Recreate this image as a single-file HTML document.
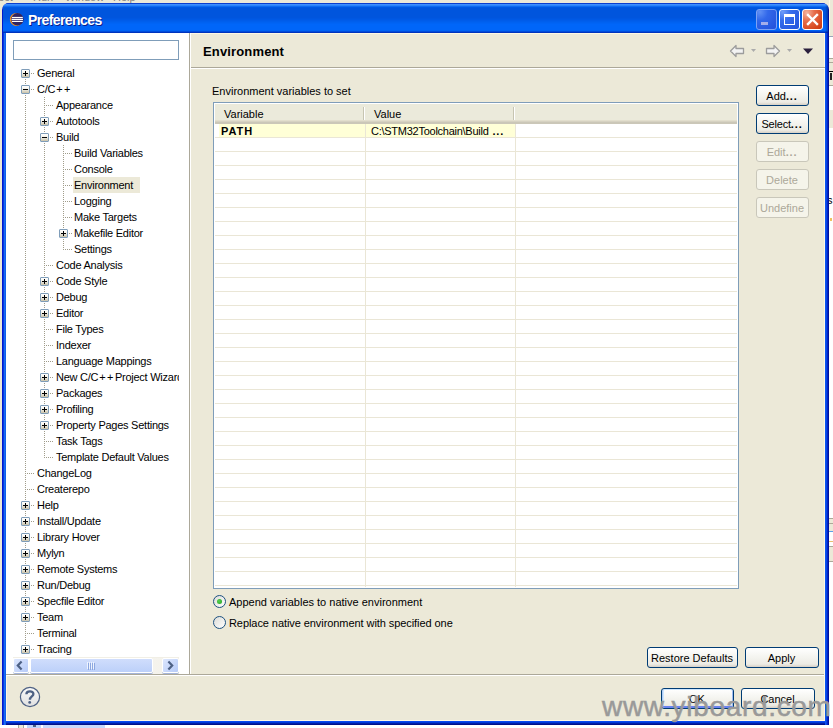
<!DOCTYPE html><html><head><meta charset="utf-8"><style>
*{margin:0;padding:0;box-sizing:border-box}
html,body{width:833px;height:728px;overflow:hidden;background:#ECE9D8}
body{position:relative;font-family:"Liberation Sans",sans-serif;font-size:11px;color:#000}
.a{position:absolute}
.t{position:absolute;white-space:nowrap;line-height:16px;height:16px}
.tr{letter-spacing:-0.25px}
.dots{font-weight:bold;letter-spacing:0.85px}
.vd{position:absolute;width:1px;background:repeating-linear-gradient(to bottom,#A09C8A 0 1px,transparent 1px 2px)}
.hd{position:absolute;height:1px;background:repeating-linear-gradient(to right,#A09C8A 0 1px,transparent 1px 2px)}
.bx{position:absolute;width:9px;height:9px;border:1px solid #7F9DB9;border-radius:1px;background:linear-gradient(#FFFFFF,#F6F4EC 40%,#C9C2AA)}
.bx:before{content:"";position:absolute;left:1px;top:3px;width:5px;height:1px;background:#000}
.bx.p:after{content:"";position:absolute;left:3px;top:1px;width:1px;height:5px;background:#000}
.btn{position:absolute;height:21px;border:1px solid #003C74;border-radius:3px;background:linear-gradient(#FFFFFF 0%,#F6F6F2 40%,#ECEBE4 85%,#D6D0C5 100%);text-align:center;line-height:20px;white-space:nowrap;text-indent:-1px}
.btn.dis{border-color:#C9C7BA;background:#F5F4EA;color:#ACA899}
.hdr{position:absolute;top:104px;height:20px;background:linear-gradient(#EBEADB 0,#EBEADB 16px,#E2DECD 16px,#E2DECD 17px,#D6D2C2 17px,#D6D2C2 18px,#CBC7B8 18px)}
</style></head><body>
<div class="a" style="left:0;top:-9px;white-space:nowrap;color:#808080;font-size:11px;line-height:12px">
<span class="a" style="left:-14px">roject</span><span class="a" style="left:33px">Run</span><span class="a" style="left:65px">Window</span><span class="a" style="left:113px">Help</span></div>
<div class="a" style="left:829px;top:36px;width:4px;height:692px;background:#fff"></div>
<div class="a" style="left:829px;top:36px;width:4px;height:1px;background:#9AA6BA"></div>
<div class="a" style="left:829px;top:58px;width:4px;height:1px;background:#ACA899"></div>
<div class="a" style="left:829px;top:59px;width:4px;height:3px;background:#ECE9D8"></div>
<div class="a" style="left:829px;top:62px;width:4px;height:1px;background:#ACA899"></div>
<div class="a" style="left:829px;top:63px;width:4px;height:8px;background:#ECE9D8"></div>
<div class="a" style="left:829px;top:71px;width:4px;height:1px;background:#000"></div>
<div class="a" style="left:829px;top:72px;width:4px;height:13px;background:#ECE9D8"></div>
<div class="a" style="left:829px;top:85px;width:4px;height:1px;background:#ACA899"></div>
<div class="a" style="left:829px;top:110px;width:4px;height:18px;background:#ECE9D8"></div>
<div class="a" style="left:829px;top:518px;width:4px;height:1px;background:#ACA899"></div>
<div class="a" style="left:829px;top:519px;width:4px;height:4px;background:#ECE9D8"></div>
<div class="a" style="left:829px;top:523px;width:4px;height:1px;background:#ACA899"></div>
<div class="a" style="left:829px;top:524px;width:4px;height:7px;background:#ECE9D8"></div>
<div class="a" style="left:829px;top:531px;width:4px;height:1px;background:#5AA0E8"></div>
<div class="a" style="left:829px;top:541px;width:4px;height:1px;background:#E8C070"></div>
<div class="a" style="left:829px;top:546px;width:4px;height:1px;background:#ACA899"></div>
<div class="a" style="left:829px;top:547px;width:4px;height:14px;background:#ECE9D8"></div>
<div class="a" style="left:829px;top:561px;width:4px;height:1px;background:#ACA899"></div>
<div class="a" style="left:830px;top:73px;width:2px;height:7px;background:#222"></div>
<div class="a" style="left:829px;top:0;width:1px;height:36px;background:#FFF8E4"></div>
<div class="a" style="left:829px;top:190px;width:4px;height:20px;overflow:hidden"><div class="t" style="left:-2px;top:2px;font-size:11px">s</div></div>
<div class="a" style="left:830px;top:218px;width:2px;height:3px;background:#F0C060"></div>
<div class="a" style="left:0;top:725px;width:833px;height:3px;background:#fff"></div>
<div class="a" style="left:18px;top:725px;width:6px;height:3px;background:#ECE9D8;border-left:1px solid #ACA899;border-right:1px solid #ACA899"></div>
<div class="a" style="left:27px;top:725px;width:14px;height:3px;background:#C4D4FA"></div>
<div class="a" style="left:33px;top:725px;width:3px;height:2px;background:#4D6185"></div>
<div class="a" style="left:43px;top:725px;width:62px;height:3px;background:#C8D8FB"></div>
<div class="a" style="left:2px;top:3px;width:827px;height:722px;border-radius:7px 7px 0 0;background:#0019CF;overflow:hidden">
<div class="a" style="left:1px;top:0;width:825px;height:30px;background:linear-gradient(to bottom,#0A3FCF 0px,#0A3FCF 1px,#3D8FFF 1px,#3D8FFF 2px,#2B82F9 2px,#2B82F9 3px,#0D6BF1 3px,#0D6BF1 4px,#0059E3 4px,#0059E3 5px,#0055DD 5px,#0055DD 14px,#0055DE 14px,#0055DE 15px,#0057E1 15px,#0057E1 16px,#0059E5 16px,#0059E5 17px,#005CE9 17px,#005CE9 18px,#005FED 18px,#005FED 19px,#0062F1 19px,#0062F1 20px,#0064F5 20px,#0064F5 21px,#0066F9 21px,#0066F9 27px,#0062F4 27px,#0062F4 28px,#004CDB 28px,#004CDB 29px,#0033BE 29px,#0033BE 30px)"></div>
<div class="a" style="left:823px;top:0;width:4px;height:30px;background:linear-gradient(to right,transparent,rgba(0,0,80,0.45))"></div>
<div class="a" style="left:0;top:30px;width:4px;height:692px;background:linear-gradient(to right,#0019CF 0,#0019CF 1px,#0836E2 1px,#0836E2 2px,#1A6CF0 2px,#1A6CF0 3px,#0F60EC 3px)"></div>
<div class="a" style="left:823px;top:30px;width:4px;height:692px;background:linear-gradient(to left,#00109A 0,#00109A 1px,#0026C8 1px,#0026C8 2px,#0A44E4 2px,#0A44E4 3px,#0A55F0 3px)"></div>
<div class="a" style="left:4px;top:718px;width:819px;height:4px;background:linear-gradient(to bottom,#0A4AF0 0,#0A4AF0 1px,#0038D8 1px,#0038D8 2px,#0020A8 2px,#0020A8 3px,#00108A 3px)"></div>
</div>
<svg class="a" style="left:7px;top:9px" width="20" height="20" viewBox="0 0 20 20"><circle cx="9.4" cy="10.4" r="6.5" fill="#F7941E"/><circle cx="10.4" cy="10.3" r="6.2" fill="#2F2461"/><rect x="5" y="7.9" width="10.8" height="1.2" fill="#fff"/><rect x="4.6" y="9.8" width="11.4" height="1.2" fill="#fff"/><rect x="5" y="11.8" width="10.8" height="1.2" fill="#fff"/></svg>
<div class="a" style="left:28px;top:12px;font-size:14px;letter-spacing:-0.6px;font-weight:bold;color:#fff;line-height:17px;text-shadow:1px 1px 0 #0A1E8C;white-space:nowrap">Preferences</div>
<div class="a" style="left:756px;top:9px;width:21px;height:21px;border:1px solid #7DA2F4;border-radius:3px;background:radial-gradient(ellipse at 15% 10%,#6090F4 0,#3268EA 35%,#2250DA 100%)"></div>
<div class="a" style="left:779px;top:9px;width:21px;height:21px;border:1px solid #fff;border-radius:3px;background:radial-gradient(ellipse at 15% 10%,#6E9CF8 0,#356CEC 35%,#2252DC 100%)"></div>
<div class="a" style="left:802px;top:9px;width:21px;height:21px;border:1px solid #fff;border-radius:3px;background:radial-gradient(ellipse at 20% 15%,#F5B49E 0,#E66E4C 35%,#D8481E 75%,#C23A12 100%)"></div>
<div class="a" style="left:761px;top:22px;width:7px;height:3px;background:#A4AEEA"></div>
<div class="a" style="left:784px;top:14px;width:11px;height:11px;border:1px solid #fff;border-top-width:3px"></div>
<svg class="a" style="left:802px;top:9px" width="21" height="21" viewBox="0 0 21 21"><path d="M6 6 L15 15 M15 6 L6 15" stroke="#fff" stroke-width="2.4" stroke-linecap="square"/></svg>
<div class="a" style="left:6px;top:33px;width:183px;height:641px;background:#fff"></div>
<div class="a" style="left:189px;top:33px;width:1px;height:641px;background:#ACA899"></div>
<div class="a" style="left:190px;top:33px;width:1px;height:641px;background:#fff"></div>
<div class="a" style="left:191px;top:33px;width:634px;height:641px;background:#ECE9D8"></div>
<div class="a" style="left:6px;top:674px;width:819px;height:1px;background:#ACA899"></div>
<div class="a" style="left:6px;top:675px;width:819px;height:1px;background:#fff"></div>
<div class="a" style="left:6px;top:676px;width:819px;height:44px;background:#ECE9D8"></div>
<div class="a" style="left:6px;top:720px;width:819px;height:1px;background:#FFF8E4"></div>
<div class="a" style="left:824px;top:33px;width:1px;height:688px;background:#FFF8E4"></div>
<div class="a" style="left:6px;top:676px;width:1px;height:45px;background:#FFF8E4"></div>
<div class="a" style="left:13px;top:40px;width:166px;height:20px;border:1px solid #7F9DB9;background:#fff"></div>
<div class="vd" style="left:25px;top:73px;height:577px"></div>
<div class="vd" style="left:44px;top:97px;height:361px"></div>
<div class="vd" style="left:63px;top:145px;height:105px"></div>
<div class="hd" style="left:31px;top:73px;width:3px"></div>
<div class="bx p" style="left:21px;top:69px"></div>
<div class="t tr" style="left:37px;top:65px">General</div>
<div class="hd" style="left:31px;top:89px;width:3px"></div>
<div class="bx" style="left:21px;top:85px"></div>
<div class="t tr" style="left:37px;top:81px">C/C<span style='letter-spacing:1.4px;margin-left:1px'>++</span></div>
<div class="hd" style="left:46px;top:105px;width:7px"></div>
<div class="t tr" style="left:56px;top:97px">Appearance</div>
<div class="hd" style="left:50px;top:121px;width:3px"></div>
<div class="bx p" style="left:40px;top:117px"></div>
<div class="t tr" style="left:56px;top:113px">Autotools</div>
<div class="hd" style="left:50px;top:137px;width:3px"></div>
<div class="bx" style="left:40px;top:133px"></div>
<div class="t tr" style="left:56px;top:129px">Build</div>
<div class="hd" style="left:65px;top:153px;width:7px"></div>
<div class="t tr" style="left:74px;top:145px">Build Variables</div>
<div class="hd" style="left:65px;top:169px;width:7px"></div>
<div class="t tr" style="left:74px;top:161px">Console</div>
<div class="hd" style="left:65px;top:185px;width:7px"></div>
<div class="a" style="left:73px;top:177px;width:67px;height:16px;background:#ECE9D8"></div>
<div class="t tr" style="left:74px;top:177px">Environment</div>
<div class="hd" style="left:65px;top:201px;width:7px"></div>
<div class="t tr" style="left:74px;top:193px">Logging</div>
<div class="hd" style="left:65px;top:217px;width:7px"></div>
<div class="t tr" style="left:74px;top:209px">Make Targets</div>
<div class="hd" style="left:69px;top:233px;width:3px"></div>
<div class="bx p" style="left:59px;top:229px"></div>
<div class="t tr" style="left:74px;top:225px">Makefile Editor</div>
<div class="hd" style="left:65px;top:249px;width:7px"></div>
<div class="t tr" style="left:74px;top:241px">Settings</div>
<div class="hd" style="left:46px;top:265px;width:7px"></div>
<div class="t tr" style="left:56px;top:257px">Code Analysis</div>
<div class="hd" style="left:50px;top:281px;width:3px"></div>
<div class="bx p" style="left:40px;top:277px"></div>
<div class="t tr" style="left:56px;top:273px">Code Style</div>
<div class="hd" style="left:50px;top:297px;width:3px"></div>
<div class="bx p" style="left:40px;top:293px"></div>
<div class="t tr" style="left:56px;top:289px">Debug</div>
<div class="hd" style="left:50px;top:313px;width:3px"></div>
<div class="bx p" style="left:40px;top:309px"></div>
<div class="t tr" style="left:56px;top:305px">Editor</div>
<div class="hd" style="left:46px;top:329px;width:7px"></div>
<div class="t tr" style="left:56px;top:321px">File Types</div>
<div class="hd" style="left:46px;top:345px;width:7px"></div>
<div class="t tr" style="left:56px;top:337px">Indexer</div>
<div class="hd" style="left:46px;top:361px;width:7px"></div>
<div class="t tr" style="left:56px;top:353px">Language Mappings</div>
<div class="hd" style="left:50px;top:377px;width:3px"></div>
<div class="bx p" style="left:40px;top:373px"></div>
<div class="t tr" style="left:56px;top:369px">New C/C<span style='letter-spacing:1.4px;margin-left:1px'>++</span>Project Wizard</div>
<div class="hd" style="left:50px;top:393px;width:3px"></div>
<div class="bx p" style="left:40px;top:389px"></div>
<div class="t tr" style="left:56px;top:385px">Packages</div>
<div class="hd" style="left:50px;top:409px;width:3px"></div>
<div class="bx p" style="left:40px;top:405px"></div>
<div class="t tr" style="left:56px;top:401px">Profiling</div>
<div class="hd" style="left:50px;top:425px;width:3px"></div>
<div class="bx p" style="left:40px;top:421px"></div>
<div class="t tr" style="left:56px;top:417px">Property Pages Settings</div>
<div class="hd" style="left:46px;top:441px;width:7px"></div>
<div class="t tr" style="left:56px;top:433px">Task Tags</div>
<div class="hd" style="left:46px;top:457px;width:7px"></div>
<div class="t tr" style="left:56px;top:449px">Template Default Values</div>
<div class="hd" style="left:27px;top:473px;width:7px"></div>
<div class="t tr" style="left:37px;top:465px">ChangeLog</div>
<div class="hd" style="left:27px;top:489px;width:7px"></div>
<div class="t tr" style="left:37px;top:481px">Createrepo</div>
<div class="hd" style="left:31px;top:505px;width:3px"></div>
<div class="bx p" style="left:21px;top:501px"></div>
<div class="t tr" style="left:37px;top:497px">Help</div>
<div class="hd" style="left:31px;top:521px;width:3px"></div>
<div class="bx p" style="left:21px;top:517px"></div>
<div class="t tr" style="left:37px;top:513px">Install/Update</div>
<div class="hd" style="left:31px;top:537px;width:3px"></div>
<div class="bx p" style="left:21px;top:533px"></div>
<div class="t tr" style="left:37px;top:529px">Library Hover</div>
<div class="hd" style="left:31px;top:553px;width:3px"></div>
<div class="bx p" style="left:21px;top:549px"></div>
<div class="t tr" style="left:37px;top:545px">Mylyn</div>
<div class="hd" style="left:31px;top:569px;width:3px"></div>
<div class="bx p" style="left:21px;top:565px"></div>
<div class="t tr" style="left:37px;top:561px">Remote Systems</div>
<div class="hd" style="left:31px;top:585px;width:3px"></div>
<div class="bx p" style="left:21px;top:581px"></div>
<div class="t tr" style="left:37px;top:577px">Run/Debug</div>
<div class="hd" style="left:31px;top:601px;width:3px"></div>
<div class="bx p" style="left:21px;top:597px"></div>
<div class="t tr" style="left:37px;top:593px">Specfile Editor</div>
<div class="hd" style="left:31px;top:617px;width:3px"></div>
<div class="bx p" style="left:21px;top:613px"></div>
<div class="t tr" style="left:37px;top:609px">Team</div>
<div class="hd" style="left:27px;top:633px;width:7px"></div>
<div class="t tr" style="left:37px;top:625px">Terminal</div>
<div class="hd" style="left:31px;top:649px;width:3px"></div>
<div class="bx p" style="left:21px;top:645px"></div>
<div class="t tr" style="left:37px;top:641px">Tracing</div>
<div class="a" style="left:179px;top:33px;width:10px;height:624px;background:#fff"></div>
<div class="a" style="left:13px;top:657px;width:166px;height:17px;background:linear-gradient(to right,#FEFEFB,#F3F1EA)"></div>
<div class="a" style="left:13px;top:657px;width:166px;height:1px;background:#F1EFE6"></div>
<div class="a" style="left:13px;top:658px;width:16px;height:15px;border-radius:2px;background:linear-gradient(135deg,#DCE6FD,#B6CBF8);border:1px solid #fff;box-shadow:0 1px 0 #A4B4D8"></div>
<div class="a" style="left:162px;top:658px;width:17px;height:15px;border-radius:2px;background:linear-gradient(135deg,#DCE6FD,#B6CBF8);border:1px solid #fff;box-shadow:0 1px 0 #A4B4D8"></div>
<svg class="a" style="left:13px;top:658px" width="16" height="16"><path d="M8.6 3.6 L4.8 7.6 L8.6 11.6" fill="none" stroke="#4D6185" stroke-width="2.2"/></svg>
<svg class="a" style="left:162px;top:658px" width="16" height="16"><path d="M6.4 3.6 L10.2 7.6 L6.4 11.6" fill="none" stroke="#4D6185" stroke-width="2.2"/></svg>
<div class="a" style="left:30px;top:658px;width:123px;height:15px;border-radius:2px;background:linear-gradient(to bottom,#D0DDFC,#BCD0F9);border:1px solid #fff;box-shadow:0 1px 0 #A4B4D8"></div>
<div class="a" style="left:87px;top:662px;width:1px;height:7px;background:#EEF3FE"></div>
<div class="a" style="left:88px;top:663px;width:1px;height:7px;background:#8CA7E0"></div>
<div class="a" style="left:89px;top:662px;width:1px;height:7px;background:#EEF3FE"></div>
<div class="a" style="left:90px;top:663px;width:1px;height:7px;background:#8CA7E0"></div>
<div class="a" style="left:91px;top:662px;width:1px;height:7px;background:#EEF3FE"></div>
<div class="a" style="left:92px;top:663px;width:1px;height:7px;background:#8CA7E0"></div>
<div class="a" style="left:93px;top:662px;width:1px;height:7px;background:#EEF3FE"></div>
<div class="a" style="left:94px;top:663px;width:1px;height:7px;background:#8CA7E0"></div>
<div class="a" style="left:191px;top:33px;width:634px;height:1px;background:#FFF8E4"></div>
<div class="t" style="left:203px;top:44px;font-size:13px;letter-spacing:0.15px;font-weight:bold">Environment</div>
<div class="a" style="left:191px;top:67px;width:634px;height:1px;background:#ACA899"></div>
<div class="a" style="left:191px;top:68px;width:634px;height:1px;background:#fff"></div>
<svg class="a" style="left:728px;top:43px" width="90" height="16" viewBox="0 0 90 16"><path d="M2.5 8 L8 2.5 L8 5.5 L15.5 5.5 L15.5 10.5 L8 10.5 L8 13.5 Z" fill="#F3F3F3" stroke="#9C9C9C" stroke-width="1.3" stroke-linejoin="round"/><path d="M23 6 L28 6 L25.5 9 Z" fill="#ABABAB"/><path d="M51.5 8 L46 2.5 L46 5.5 L38.5 5.5 L38.5 10.5 L46 10.5 L46 13.5 Z" fill="#F3F3F3" stroke="#9C9C9C" stroke-width="1.3" stroke-linejoin="round"/><path d="M59 6 L64 6 L61.5 9 Z" fill="#ABABAB"/><path d="M75 5.5 L85 5.5 L80 11 Z" fill="#2A1F3D"/></svg>
<div class="t" style="left:212px;top:83px">Environment variables to set</div>
<div class="a" style="left:213px;top:102px;width:526px;height:487px;border:1px solid #7F9DB9;background:#fff"></div>
<div class="hdr" style="left:215px;width:522px"></div>
<div class="a" style="left:363px;top:107px;width:1px;height:13px;background:#C7C5B2"></div>
<div class="a" style="left:364px;top:107px;width:1px;height:13px;background:#fff"></div>
<div class="a" style="left:513px;top:107px;width:1px;height:13px;background:#C7C5B2"></div>
<div class="a" style="left:514px;top:107px;width:1px;height:13px;background:#fff"></div>
<div class="t" style="left:224px;top:106px">Variable</div>
<div class="t" style="left:374px;top:106px">Value</div>
<div class="a" style="left:219px;top:124px;width:296px;height:13px;background:#FFFFD7"></div>
<div class="a" style="left:215px;top:137px;width:522px;height:1px;background:#EAE6D6"></div>
<div class="a" style="left:215px;top:151px;width:522px;height:1px;background:#EAE6D6"></div>
<div class="a" style="left:215px;top:165px;width:522px;height:1px;background:#EAE6D6"></div>
<div class="a" style="left:215px;top:179px;width:522px;height:1px;background:#EAE6D6"></div>
<div class="a" style="left:215px;top:193px;width:522px;height:1px;background:#EAE6D6"></div>
<div class="a" style="left:215px;top:207px;width:522px;height:1px;background:#EAE6D6"></div>
<div class="a" style="left:215px;top:221px;width:522px;height:1px;background:#EAE6D6"></div>
<div class="a" style="left:215px;top:235px;width:522px;height:1px;background:#EAE6D6"></div>
<div class="a" style="left:215px;top:249px;width:522px;height:1px;background:#EAE6D6"></div>
<div class="a" style="left:215px;top:263px;width:522px;height:1px;background:#EAE6D6"></div>
<div class="a" style="left:215px;top:277px;width:522px;height:1px;background:#EAE6D6"></div>
<div class="a" style="left:215px;top:291px;width:522px;height:1px;background:#EAE6D6"></div>
<div class="a" style="left:215px;top:305px;width:522px;height:1px;background:#EAE6D6"></div>
<div class="a" style="left:215px;top:319px;width:522px;height:1px;background:#EAE6D6"></div>
<div class="a" style="left:215px;top:333px;width:522px;height:1px;background:#EAE6D6"></div>
<div class="a" style="left:215px;top:347px;width:522px;height:1px;background:#EAE6D6"></div>
<div class="a" style="left:215px;top:361px;width:522px;height:1px;background:#EAE6D6"></div>
<div class="a" style="left:215px;top:375px;width:522px;height:1px;background:#EAE6D6"></div>
<div class="a" style="left:215px;top:389px;width:522px;height:1px;background:#EAE6D6"></div>
<div class="a" style="left:215px;top:403px;width:522px;height:1px;background:#EAE6D6"></div>
<div class="a" style="left:215px;top:417px;width:522px;height:1px;background:#EAE6D6"></div>
<div class="a" style="left:215px;top:431px;width:522px;height:1px;background:#EAE6D6"></div>
<div class="a" style="left:215px;top:445px;width:522px;height:1px;background:#EAE6D6"></div>
<div class="a" style="left:215px;top:459px;width:522px;height:1px;background:#EAE6D6"></div>
<div class="a" style="left:215px;top:473px;width:522px;height:1px;background:#EAE6D6"></div>
<div class="a" style="left:215px;top:487px;width:522px;height:1px;background:#EAE6D6"></div>
<div class="a" style="left:215px;top:501px;width:522px;height:1px;background:#EAE6D6"></div>
<div class="a" style="left:215px;top:515px;width:522px;height:1px;background:#EAE6D6"></div>
<div class="a" style="left:215px;top:529px;width:522px;height:1px;background:#EAE6D6"></div>
<div class="a" style="left:215px;top:543px;width:522px;height:1px;background:#EAE6D6"></div>
<div class="a" style="left:215px;top:557px;width:522px;height:1px;background:#EAE6D6"></div>
<div class="a" style="left:215px;top:571px;width:522px;height:1px;background:#EAE6D6"></div>
<div class="a" style="left:215px;top:585px;width:522px;height:1px;background:#EAE6D6"></div>
<div class="a" style="left:365px;top:124px;width:1px;height:463px;background:#EAE6D6"></div>
<div class="a" style="left:515px;top:124px;width:1px;height:463px;background:#EAE6D6"></div>
<div class="t" style="left:221px;top:123px;font-weight:bold;letter-spacing:0.95px">PATH</div>
<div class="t" style="left:371px;top:123px;letter-spacing:-0.26px">C:\STM32Toolchain\Build<span style="letter-spacing:0.85px;font-weight:bold"> ...</span></div>
<div class="btn" style="left:756px;top:85px;width:53px">Add<span class='dots'>...</span></div>
<div class="btn" style="left:756px;top:113px;width:53px"><span style='letter-spacing:-0.2px'>Select</span><span class='dots'>...</span></div>
<div class="btn dis" style="left:756px;top:141px;width:53px">Edit<span class='dots'>...</span></div>
<div class="btn dis" style="left:756px;top:169px;width:53px">Delete</div>
<div class="btn dis" style="left:756px;top:197px;width:53px">Undefine</div>
<div class="a" style="left:213px;top:595px;width:13px;height:13px;border-radius:50%;border:1px solid #1C5180;background:linear-gradient(135deg,#DCDCD7,#FFFFFF)"></div>
<div class="a" style="left:217px;top:599px;width:5px;height:5px;border-radius:50%;background:radial-gradient(circle at 40% 40%,#55D051,#21A121)"></div>
<div class="t" style="left:229px;top:594px">Append variables to native environment</div>
<div class="a" style="left:213px;top:616px;width:13px;height:13px;border-radius:50%;border:1px solid #1C5180;background:linear-gradient(135deg,#DCDCD7,#FFFFFF)"></div>
<div class="t" style="left:229px;top:615px"><span style='letter-spacing:-0.07px'>Replace native environment with specified one</span></div>
<div class="btn" style="left:647px;top:647px;width:91px">Restore Defaults</div>
<div class="btn" style="left:745px;top:647px;width:74px">Apply</div>
<div class="btn" style="left:661px;top:688px;width:73px;box-shadow:inset 0 1px 0 #CEE7FF, inset 1px 0 0 #B0CCF6, inset -1px 0 0 #9DBBF2, inset 0 -2px 0 #6982EE, inset 2px 0 0 #CEE7FF">OK</div>
<div class="btn" style="left:741px;top:688px;width:74px">Cancel</div>
<svg class="a" style="left:19px;top:686px" width="22" height="22" viewBox="0 0 22 22"><defs><linearGradient id="hg" x1="0" y1="0" x2="0" y2="1"><stop offset="0" stop-color="#FAFAFA"/><stop offset="1" stop-color="#E0E0E0"/></linearGradient></defs><circle cx="11" cy="11" r="9.6" fill="url(#hg)" stroke="#4E6184" stroke-width="1.2"/><path d="M7.4 8.3 C7.4 4.6 14.4 4.4 14.4 8.0 C14.4 10.4 10.9 10.5 10.9 13.7" fill="none" stroke="#4E6184" stroke-width="2.3"/><circle cx="10.7" cy="16.4" r="1.4" fill="#4E6184"/></svg>
<div class="a" style="left:602px;top:691px;font-size:28px;letter-spacing:0.68px;-webkit-text-stroke:0.5px #999;line-height:32px;color:#999999;white-space:nowrap">www.yiboard.com</div>
</body></html>
